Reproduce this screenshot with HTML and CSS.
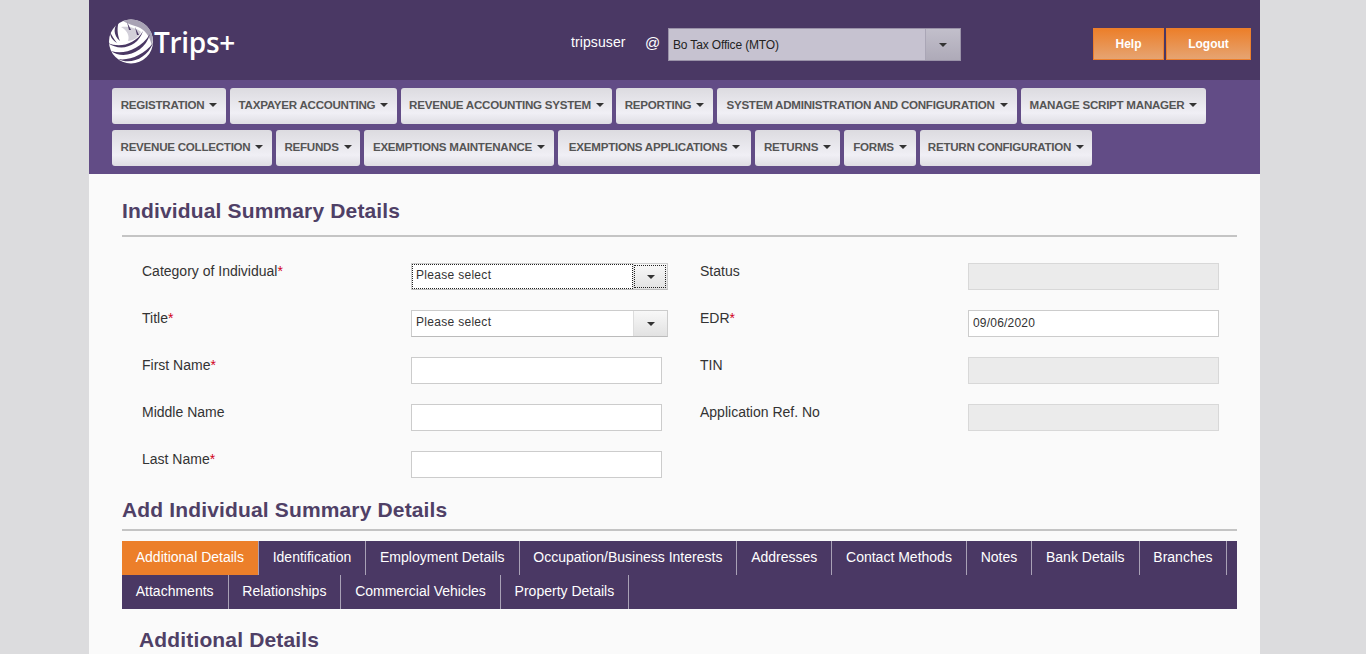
FILE: index.html
```html
<!DOCTYPE html>
<html lang="en">
<head>
    <meta charset="UTF-8">
    <meta name="viewport" content="width=device-width, initial-scale=1.0">
    <title>Trips+</title>
    <link rel="stylesheet" href="styles.css">
</head>
<body>

    <div id="page">
        <!-- Header -->
        <div id="header">
            <div id="logo">
                <svg width="46" height="47" viewBox="0 0 46 47">
                    <circle cx="23" cy="23.5" r="22" fill="#fff"/>
                    <path d="M15 3C25 -1 38 3 43 14C45 19 45 24 44 28C42 18 36 11 30 9C25 7 20 6 15 3z" fill="#a9a3b5"/>
                    <path d="M13 9C20 8 29 10 33 14C31 19 25 23 20 23C22 18 19 12 13 9z" fill="#d2cfd9"/>
                    <path d="M0 25C11 30 27 27 35 13C30 29 12 34 0 25z" fill="#4a3864"/>
                    <path d="M3 33C15 37 32 32 42 16C37 35 15 42 3 33z" fill="#4a3864"/>
                    <path d="M10 41C21 43 36 37 45 25C39 41 22 47 10 41z" fill="#4a3864"/>
                    <path d="M11 3C5 9 5 17 12 23C9 16 9 9 11 3z" fill="#4a3864"/>
                    <path d="M2 14C2 18 4 22 9 25C6 21 4 18 2 14z" fill="#4a3864"/>
                    <path d="M27 9L31 17L29 17z" fill="#4a3864"/>
                    <path d="M19 4L23 12L21 12z" fill="#4a3864"/>
                </svg>
                <span class="logo-text">Trips+</span>
            </div>
            <div id="user-info">
                <span class="user-name">tripsuser</span>
                <span class="at-sign">@</span>
                <div class="office-select">
                    <span class="office-value">Bo Tax Office (MTO)</span>
                    <span class="office-btn"><i class="caret"></i></span>
                </div>
            </div>
            <div id="header-btns">
                <button class="orange-btn help-btn">Help</button>
                <button class="orange-btn logout-btn">Logout</button>
            </div>
        </div>

        <!-- Main menu -->
        <div id="menu">
            <div class="menu-row">
                <a class="menu-item m-registration">REGISTRATION<i class="caret"></i></a>
                <a class="menu-item m-taxpayer">TAXPAYER ACCOUNTING<i class="caret"></i></a>
                <a class="menu-item m-revenue">REVENUE ACCOUNTING SYSTEM<i class="caret"></i></a>
                <a class="menu-item m-reporting">REPORTING<i class="caret"></i></a>
                <a class="menu-item m-system">SYSTEM ADMINISTRATION AND CONFIGURATION<i class="caret"></i></a>
                <a class="menu-item m-script">MANAGE SCRIPT MANAGER<i class="caret"></i></a>
            </div>
            <div class="menu-row">
                <a class="menu-item m-collection">REVENUE COLLECTION<i class="caret"></i></a>
                <a class="menu-item m-refunds">REFUNDS<i class="caret"></i></a>
                <a class="menu-item m-maintenance">EXEMPTIONS MAINTENANCE<i class="caret"></i></a>
                <a class="menu-item m-applications">EXEMPTIONS APPLICATIONS<i class="caret"></i></a>
                <a class="menu-item m-returns">RETURNS<i class="caret"></i></a>
                <a class="menu-item m-forms">FORMS<i class="caret"></i></a>
                <a class="menu-item m-config">RETURN CONFIGURATION<i class="caret"></i></a>
            </div>
        </div>

        <!-- Content -->
        <div id="content">
            <h2 class="section-title">Individual Summary Details</h2>

            <div class="form-grid">
                <label class="form-label">Category of Individual<span class="req">*</span></label>
                <div class="combo combo-focus">
                    <span class="combo-value">Please select</span>
                    <span class="combo-btn"><i class="caret"></i></span>
                </div>
                <label class="form-label">Status</label>
                <input type="text" class="text-input disabled-input" disabled>

                <label class="form-label">Title<span class="req">*</span></label>
                <div class="combo">
                    <span class="combo-value">Please select</span>
                    <span class="combo-btn"><i class="caret"></i></span>
                </div>
                <label class="form-label">EDR<span class="req">*</span></label>
                <input type="text" class="text-input" value="09/06/2020">

                <label class="form-label">First Name<span class="req">*</span></label>
                <input type="text" class="text-input">
                <label class="form-label">TIN</label>
                <input type="text" class="text-input disabled-input" disabled>

                <label class="form-label">Middle Name</label>
                <input type="text" class="text-input">
                <label class="form-label">Application Ref. No</label>
                <input type="text" class="text-input disabled-input" disabled>

                <label class="form-label">Last Name<span class="req">*</span></label>
                <input type="text" class="text-input">
            </div>

            <h2 class="section-title add-title">Add Individual Summary Details</h2>

            <div id="tabs">
                <a class="tab active">Additional Details</a>
                <a class="tab">Identification</a>
                <a class="tab">Employment Details</a>
                <a class="tab">Occupation/Business Interests</a>
                <a class="tab">Addresses</a>
                <a class="tab">Contact Methods</a>
                <a class="tab">Notes</a>
                <a class="tab">Bank Details</a>
                <a class="tab">Branches</a>
                <a class="tab">Attachments</a>
                <a class="tab">Relationships</a>
                <a class="tab">Commercial Vehicles</a>
                <a class="tab">Property Details</a>
            </div>

            <h2 class="sub-title">Additional Details</h2>
        </div>
    </div>

</body>
</html>
```

FILE: styles.css
```css
html, body {
    height: 100%;
}

body {
    font-family: "Liberation Sans", Arial, sans-serif;
    background-color: #dcdcde;
    margin: 0;
    padding: 0;
    overflow: hidden;
}

#page {
    width: 1171px;
    height: 654px;
    margin-left: 89px;
    background-color: #fafafa;
    overflow: hidden;
}

/* header */
#header {
    height: 80px;
    background-color: #4a3864;
    display: flex;
    align-items: flex-start;
}

#logo {
    display: flex;
    align-items: center;
    width: 482px;
    padding: 18px 0 0 19px;
    box-sizing: border-box;
}

.logo-text {
    color: #fff;
    font-family: "Open Sans", sans-serif;
    font-size: 28px;
    font-weight: 600;
    line-height: 46px;
    margin-left: 0;
    letter-spacing: -0.3px;
}

#user-info {
    display: flex;
    align-items: flex-start;
    color: #fff;
    font-size: 14px;
    padding-top: 28px;
    width: 522px;
}

.user-name {
    margin-top: 6px;
    width: 74px;
    letter-spacing: 0.1px;
}

.at-sign {
    margin-top: 6px;
    font-size: 15px;
    width: 23px;
}

.office-select {
    display: flex;
    width: 293px;
    height: 33px;
    box-sizing: border-box;
    border: 1px solid #9a92a8;
    background-color: #c6c2d0;
    color: #222;
    font-size: 12px;
    letter-spacing: -0.15px;
}

.office-value {
    flex: 1;
    padding: 9px 0 0 4px;
}

.office-btn {
    width: 34px;
    border-left: 1px solid #aaa6b6;
    background: linear-gradient(#c2bfcb, #aeaab8);
    display: flex;
    align-items: center;
    justify-content: center;
}

.caret {
    display: inline-block;
    width: 0;
    height: 0;
    border-left: 4px solid transparent;
    border-right: 4px solid transparent;
    border-top: 4px solid #333;
}

#header-btns {
    display: flex;
    gap: 2px;
    padding-top: 28px;
}

.orange-btn {
    height: 32px;
    border: 1px solid #ec7f2c;
    background: linear-gradient(#ec7f2a, #e6a472);
    color: #fff;
    font-family: "Liberation Sans", Arial, sans-serif;
    font-size: 12px;
    font-weight: bold;
    padding: 0;
}

.help-btn {
    width: 71px;
}

.logout-btn {
    width: 85px;
}

/* menu */
#menu {
    height: 94px;
    box-sizing: border-box;
    background-color: #624c86;
    padding: 8px 0 0 23px;
}

.menu-row {
    display: flex;
    gap: 4px;
    margin-bottom: 6px;
}

.menu-item {
    height: 36px;
    box-sizing: border-box;
    padding-bottom: 3px;
    display: flex;
    align-items: center;
    justify-content: center;
    border-radius: 3px;
    background: linear-gradient(#dcdbe0, #f0eff5 70%, #dedde3);
    color: #555;
    font-size: 11.6px;
    font-weight: bold;
    letter-spacing: -0.26px;
    white-space: nowrap;
}

.menu-item .caret {
    margin-left: 5px;
}

.m-registration { width: 114px; }
.m-taxpayer { width: 167px; }
.m-revenue { width: 211px; }
.m-reporting { width: 97px; }
.m-system { width: 300px; }
.m-script { width: 185px; }
.m-collection { width: 160px; }
.m-refunds { width: 84px; }
.m-maintenance { width: 190px; }
.m-applications { width: 193px; }
.m-returns { width: 85px; }
.m-forms { width: 72px; }
.m-config { width: 172px; }

/* content */
#content {
    padding: 0 23px 0 33px;
}

.section-title {
    margin: 0;
    color: #4f4066;
    font-size: 21px;
    font-weight: bold;
    letter-spacing: 0.15px;
    height: 61px;
    line-height: 74px;
    border-bottom: 2px solid #c4c4c4;
    box-sizing: content-box;
}

.form-grid {
    display: grid;
    grid-template-columns: 269px 289px 268px 251px;
    grid-template-rows: repeat(4, 47px) 38px;
    padding: 26px 0 0 20px;
}

.form-label {
    font-size: 14px;
    color: #333;
}

.req {
    color: #d0021b;
}

.text-input {
    width: 251px;
    height: 27px;
    box-sizing: border-box;
    border: 1px solid #ccc;
    background-color: #fff;
    font-family: "Liberation Sans", Arial, sans-serif;
    font-size: 12px;
    letter-spacing: 0.2px;
    color: #333;
    padding: 1px 4px 3px;
    margin: 0;
    border-radius: 0;
    outline: none;
}

.disabled-input {
    background-color: #ebebeb;
    border-color: #d8d8d8;
}

.combo {
    display: flex;
    width: 257px;
    height: 27px;
    box-sizing: border-box;
    border: 1px solid #ccc;
    border-bottom-color: #bbb;
    background-color: #fff;
    font-size: 12px;
    letter-spacing: 0.3px;
    color: #333;
}

.combo-value {
    flex: 1;
    padding: 4px 0 0 4px;
}

.combo-btn {
    width: 33px;
    border-left: 1px solid #ddd;
    background: linear-gradient(#f8f8f8, #e2e2e2);
    display: flex;
    align-items: center;
    justify-content: center;
}

.combo-focus .combo-value {
    outline: 1px dotted #222;
    outline-offset: -1px;
}

.combo-focus .combo-btn {
    outline: 1px dotted #222;
    outline-offset: -2px;
}

.add-title {
    height: 40px;
    line-height: 42px;
}

#tabs {
    display: flex;
    flex-wrap: wrap;
    width: 1115px;
    margin-top: 10px;
    background-color: #4a3864;
}

.tab {
    height: 34px;
    line-height: 32px;
    box-sizing: border-box;
    padding: 0 14px 0 13.75px;
    color: #fff;
    font-size: 14px;
    border-right: 1px solid #a9a1b6;
}

.tab.active {
    background-color: #ec7f2a;
}

.sub-title {
    margin: 19px 0 0 17px;
    color: #4f4066;
    font-size: 21px;
    font-weight: bold;
    letter-spacing: 0.15px;
}
```
